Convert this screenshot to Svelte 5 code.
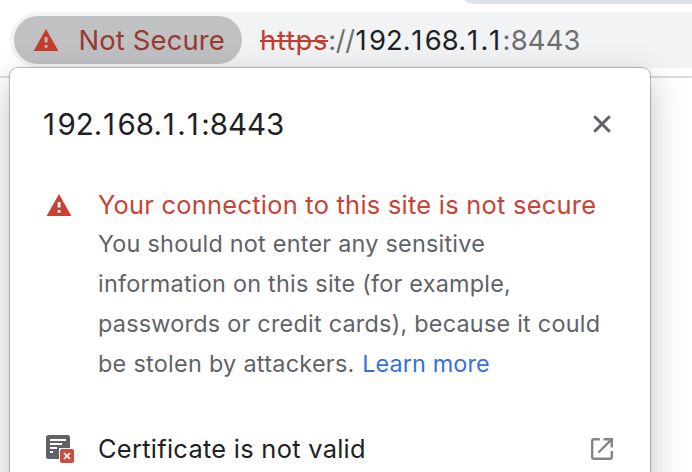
<script>
  const host = '192.168.1.1';
  const port = ':8443';
  const lines = [
    'You should not enter any sensitive',
    'information on this site (for example,',
    'passwords or credit cards), because it could'
  ];
</script>

{#snippet address(text)}{#each text.split('') as c}{#if c === '1'}<span class="one">1</span>{:else}{c}{/if}{/each}{/snippet}

{#snippet warning(color)}
  <svg class="warn" width="26" height="22" viewBox="0 0 26 22"><path fill={color} fill-rule="evenodd" d="M13 0 25.4 22H.6ZM11.7 8v5.6h2.8V8Zm0 8v2.8h2.8V16Z"/></svg>
{/snippet}

<div class="page">
  <div class="tab"></div>
  <div class="toolbar">
    <div class="omnibox">
      <div class="chip">
        {@render warning('#c63d2f')}
        <span>Not Secure</span>
      </div>
      <div class="url"><span class="scheme">https</span><span class="dim slashes">://</span><span class="host">{@render address(host)}</span><span class="dim port">{port}</span></div>
    </div>
  </div>

  <div class="bubble">
    <div class="head">
      <span class="title">{@render address(host + port)}</span>
      <svg class="close" width="18" height="18" viewBox="0 0 18 18"><path d="M1.2 1.2 16.8 16.8M16.8 1.2 1.2 16.8" stroke="#5f6368" stroke-width="3" fill="none"/></svg>
    </div>
    <div class="status">
      {@render warning('#c94334')}
      <div class="copy">
        <div class="summary">Your connection to this site is not secure</div>
        {#each lines as text}
          <div class="line">{text}</div>
        {/each}
        <div class="line last">be stolen by attackers. <span class="link">Learn more</span></div>
      </div>
    </div>
    <div class="cert">
      <svg width="28" height="28" viewBox="0 0 28 28">
        <rect width="24" height="24" rx="2.5" fill="#5f6368"/>
        <path d="M4 5h16M4 9h12M4 13h7M4 17h3" stroke="#fff" stroke-width="2"/>
        <rect x="13" y="13" width="16" height="16" fill="#fff"/>
        <rect x="14" y="14" width="14" height="14" rx="2" fill="#c94d40"/>
        <path d="m18 18 6 6m0-6-6 6" stroke="#fff" stroke-width="1.7"/>
      </svg>
      <span class="label">Certificate is not valid</span>
      <svg width="22" height="22" viewBox="0 0 22 22" fill="none" stroke="#80868b" stroke-width="2.4"><path d="M9 1.2H3Q1.2 1.2 1.2 3v16q0 1.8 1.8 1.8h16q1.8 0 1.8-1.8v-6M12.5 1.2h8.3v8.3M20.8 1.2 7.5 14.5"/></svg>
    </div>
  </div>
</div>

<style>
  :global(body) { background: #fff; overflow: hidden; }
  .page { position: relative; width: 692px; height: 472px; overflow: hidden; box-sizing: border-box; padding-top: 12px; font-family: Inter, "Liberation Sans", sans-serif; background: #fff; font-feature-settings: "calt" 0; }
  svg { display: block; flex: none; }
  span { white-space: pre; }
  .tab { position: absolute; left: 460px; top: -20px; width: 260px; height: 24px; border-radius: 0 0 0 14px; background: #dee1e6; }
  .toolbar { height: 64px; border-bottom: 2px solid #dadce0; }
  .omnibox { display: flex; align-items: center; height: 56px; box-sizing: border-box; margin-left: 10px; padding-left: 4px; border-radius: 28px 0 0 28px; background: #f1f3f4; }
  .chip { display: flex; align-items: center; box-sizing: border-box; width: 228px; height: 48px; padding-left: 19px; border-radius: 24px; background: #c0c1c2; color: #983a31; font-size: 27.4px; letter-spacing: .15px; gap: 19.5px; }
  .url { margin-left: 18px; font-size: 27.4px; line-height: 48px; }
  .scheme { color: #c63d2f; text-decoration: line-through; text-decoration-thickness: 2px; letter-spacing: .7px; }
  .slashes { letter-spacing: -.4px; }
  .dim { color: #6c6f72; }
  .port { letter-spacing: .2px; }
  .host { color: #202124; }
  .one { padding: 0 .085em 0 .03em; }
  .bubble { position: absolute; left: 10px; top: 68px; width: 640px; height: 480px; box-sizing: border-box; padding: 32px 36px 0 32px; border-radius: 8px; background: #fff; box-shadow: 0 0 1px 1px rgba(0,0,0,.26), 0 12px 36px rgba(0,0,0,.25); }
  .head { display: flex; align-items: center; justify-content: space-between; height: 48px; }
  .title { font-size: 29.5px; letter-spacing: 0; color: #202124; }
  .close { margin-right: 3px; }
  .status { display: flex; margin-top: 38px; }
  .status .warn { margin: 8px 0 0 3.5px; }
  .copy { margin-left: 26.5px; }
  .summary { height: 38px; line-height: 38px; font-size: 25.4px; letter-spacing: .265px; color: #c94334; }
  .line { height: 40px; line-height: 40px; font-size: 23.4px; letter-spacing: .24px; color: #5f6368; white-space: nowrap; }
  .line.last { letter-spacing: .29px; }
  .link { margin-left: .8px; color: #376fe0; letter-spacing: .1px; }
  .cert { display: flex; align-items: center; margin: 49px 1px 0 4px; }
  .label { flex: 1; margin-left: 24px; font-size: 25.4px; letter-spacing: .29px; color: #202124; }
</style>
